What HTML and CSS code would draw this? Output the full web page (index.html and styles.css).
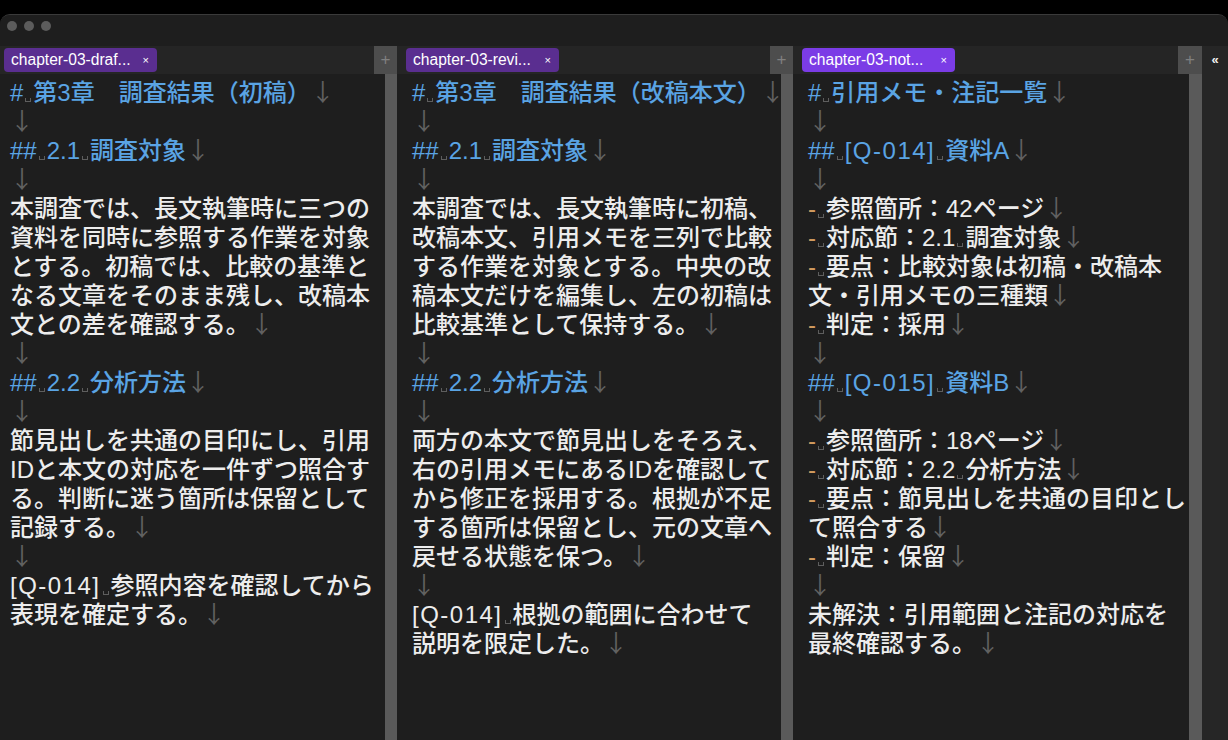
FILE: index.html
```html
<!DOCTYPE html>
<html lang="ja">
<head>
<meta charset="utf-8">
<title>chapter-03</title>
<link rel="stylesheet" href="styles.css">
</head>
<body>
<div class="window">
  <div class="titlebar">
    <span class="dot"></span><span class="dot"></span><span class="dot"></span>
  </div>
  <div class="main">
    <section class="pane first">
      <div class="tabbar">
        <div class="tab"><span class="tab-name">chapter-03-draf...</span><span class="tab-x">×</span></div>
        <div class="plus">+</div>
      </div>
      <div class="pane-body">
        <div class="doc">
          <p class="h">#<span class="s"></span>第3章　調査結果（初稿）<span class="nl">↓</span></p>
          <p><span class="nl">↓</span></p>
          <p class="h">##<span class="s"></span>2.1<span class="s"></span>調査対象<span class="nl">↓</span></p>
          <p><span class="nl">↓</span></p>
          <p>本調査では、長文執筆時に三つの資料を同時に参照する作業を対象とする。初稿では、比較の基準となる文章をそのまま残し、改稿本文との差を確認する。<span class="nl">↓</span></p>
          <p><span class="nl">↓</span></p>
          <p class="h">##<span class="s"></span>2.2<span class="s"></span>分析方法<span class="nl">↓</span></p>
          <p><span class="nl">↓</span></p>
          <p>節見出しを共通の目印にし、引用IDと本文の対応を一件ずつ照合する。判断に迷う箇所は保留として記録する。<span class="nl">↓</span></p>
          <p><span class="nl">↓</span></p>
          <p><span class="ref">[Q-014]</span><span class="s"></span>参照内容を確認してから表現を確定する。<span class="nl">↓</span></p>
        </div>
        <div class="sb"></div>
      </div>
    </section>
    <section class="pane second">
      <div class="tabbar">
        <div class="tab"><span class="tab-name">chapter-03-revi...</span><span class="tab-x">×</span></div>
        <div class="plus">+</div>
      </div>
      <div class="pane-body">
        <div class="doc">
          <p class="h">#<span class="s"></span>第3章　調査結果（改稿本文）<span class="nl">↓</span></p>
          <p><span class="nl">↓</span></p>
          <p class="h">##<span class="s"></span>2.1<span class="s"></span>調査対象<span class="nl">↓</span></p>
          <p><span class="nl">↓</span></p>
          <p>本調査では、長文執筆時に初稿、改稿本文、引用メモを三列で比較する作業を対象とする。中央の改稿本文だけを編集し、左の初稿は比較基準として保持する。<span class="nl">↓</span></p>
          <p><span class="nl">↓</span></p>
          <p class="h">##<span class="s"></span>2.2<span class="s"></span>分析方法<span class="nl">↓</span></p>
          <p><span class="nl">↓</span></p>
          <p>両方の本文で節見出しをそろえ、右の引用メモにあるIDを確認してから修正を採用する。根拠が不足する箇所は保留とし、元の文章へ戻せる状態を保つ。<span class="nl">↓</span></p>
          <p><span class="nl">↓</span></p>
          <p><span class="ref">[Q-014]</span><span class="s"></span>根拠の範囲に合わせて説明を限定した。<span class="nl">↓</span></p>
        </div>
        <div class="sb"></div>
      </div>
    </section>
    <section class="pane third">
      <div class="tabbar">
        <div class="tab active"><span class="tab-name">chapter-03-not...</span><span class="tab-x">×</span></div>
        <div class="plus">+</div>
      </div>
      <div class="pane-body">
        <div class="doc">
          <p class="h">#<span class="s"></span>引用メモ・注記一覧<span class="nl">↓</span></p>
          <p><span class="nl">↓</span></p>
          <p class="h">##<span class="s"></span><span class="ref">[Q-014]</span><span class="s"></span>資料A<span class="nl">↓</span></p>
          <p><span class="nl">↓</span></p>
          <p><span class="dash">-</span><span class="s"></span>参照箇所：42ページ<span class="nl">↓</span></p>
          <p><span class="dash">-</span><span class="s"></span>対応節：2.1<span class="s"></span>調査対象<span class="nl">↓</span></p>
          <p><span class="dash">-</span><span class="s"></span>要点：比較対象は初稿・改稿本文・引用メモの三種類<span class="nl">↓</span></p>
          <p><span class="dash">-</span><span class="s"></span>判定：採用<span class="nl">↓</span></p>
          <p><span class="nl">↓</span></p>
          <p class="h">##<span class="s"></span><span class="ref">[Q-015]</span><span class="s"></span>資料B<span class="nl">↓</span></p>
          <p><span class="nl">↓</span></p>
          <p><span class="dash">-</span><span class="s"></span>参照箇所：18ページ<span class="nl">↓</span></p>
          <p><span class="dash">-</span><span class="s"></span>対応節：2.2<span class="s"></span>分析方法<span class="nl">↓</span></p>
          <p><span class="dash">-</span><span class="s"></span>要点：節見出しを共通の目印として照合する<span class="nl">↓</span></p>
          <p><span class="dash">-</span><span class="s"></span>判定：保留<span class="nl">↓</span></p>
          <p><span class="nl">↓</span></p>
          <p>未解決：引用範囲と注記の対応を最終確認する。<span class="nl">↓</span></p>
        </div>
        <div class="sb"></div>
      </div>
    </section>
    <aside class="side">
      <span class="collapse">«</span>
    </aside>
  </div>
</div>
</body>
</html>
```

FILE: styles.css
```css
* {
  box-sizing: border-box;
  margin: 0;
  padding: 0;
}

html, body {
  height: 100%;
}

body {
  background: #000;
  font-family: "Liberation Sans", "Noto Sans CJK JP", sans-serif;
  overflow: hidden;
}

.window {
  margin-top: 14px;
  height: 726px;
  background: #1e1e1e;
  border-radius: 10px 10px 0 0;
  border-top: 1px solid #3a3a3a;
  display: flex;
  flex-direction: column;
  overflow: hidden;
}

.titlebar {
  height: 31px;
  flex: none;
  display: flex;
  align-items: flex-start;
  gap: 7px;
  padding: 6px 0 0 7px;
  background: #1e1e1e;
}

.dot {
  width: 10px;
  height: 10px;
  border-radius: 50%;
  background: #5c5c5c;
}

.main {
  flex: 1;
  display: flex;
  min-height: 0;
}

.pane {
  display: flex;
  flex-direction: column;
  flex: none;
}

.pane.first { width: 397px; }
.pane.second { width: 396px; }
.pane.third { width: 409px; }

.tabbar {
  height: 28px;
  flex: none;
  background: #252525;
  display: flex;
  align-items: flex-start;
  padding-left: 9px;
}

.pane.first .tabbar { padding-left: 4px; }

.tab {
  margin-top: 2px;
  width: 153px;
  height: 24px;
  border-radius: 4px;
  background: #5a2e90;
  display: flex;
  align-items: center;
  justify-content: space-between;
  padding: 0 8px 0 7px;
  color: #ffffff;
  font-size: 15.6px;
  white-space: nowrap;
}

.tab.active {
  background: #7b3ce6;
}

.tab-x {
  font-size: 11px;
  color: #ffffff;
}

.plus {
  margin-left: auto;
  width: 23px;
  height: 28px;
  background: #4d4d4d;
  color: #808080;
  font-size: 17px;
  line-height: 28px;
  text-align: center;
}

.pane.third .plus { width: 24px; }

.pane-body {
  flex: 1;
  display: flex;
  min-height: 0;
}

.doc {
  flex: 1;
  min-width: 0;
  padding: 4px 7px 0 15px;
  color: #ededed;
  font-size: 24px;
  font-weight: 500;
  line-height: 29px;
}

.pane.first .doc {
  padding-left: 10px;
  padding-right: 6px;
}

.pane.third .doc {
  padding-right: 1px;
}

.doc p {
  margin: 0;
}

.doc .h {
  color: #5aa4e4;
}

.ref {
  letter-spacing: 1.5px;
}

.s {
  display: inline-block;
  width: 6px;
  height: 4px;
  margin: 0 2px;
  border: 1px solid #5e5e5e;
  border-top: 0;
  vertical-align: -1px;
}

.nl {
  display: inline-block;
  width: 0;
  white-space: nowrap;
  font-family: "Noto Sans CJK JP", sans-serif;
  font-weight: 400;
  color: #616161;
  line-height: 0;
}

.dash {
  color: #d29b5e;
}

.sb {
  width: 12px;
  flex: none;
  background: #5a5a5a;
}

.pane.third .sb { width: 13px; }

.side {
  flex: 1;
  background: #262626;
  display: flex;
  justify-content: center;
  padding-top: 4px;
}

.collapse {
  color: #f2f2f2;
  font-size: 13px;
  font-weight: bold;
  line-height: 20px;
}
```
